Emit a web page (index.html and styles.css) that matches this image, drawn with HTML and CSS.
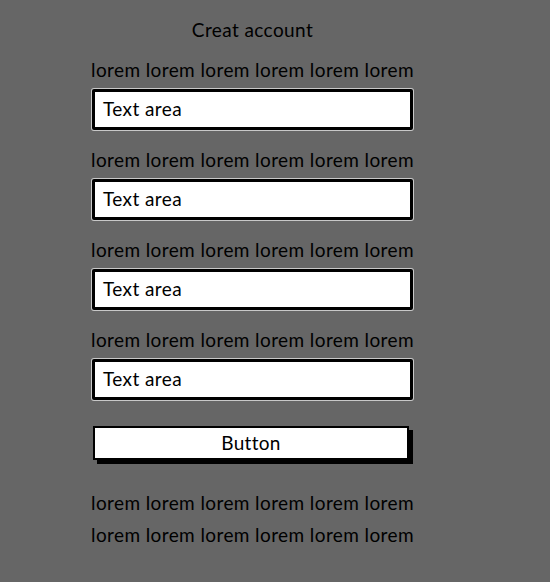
FILE: index.html
```html
<!DOCTYPE html>
<html>
<head>
<meta charset="utf-8">
<link rel="stylesheet" href="styles.css">
</head>
<body>
<div class="form">
  <div class="title">Creat account</div>
  <div class="group">
    <div class="label">lorem lorem lorem lorem lorem lorem</div>
    <div class="field">Text area</div>
  </div>
  <div class="group">
    <div class="label">lorem lorem lorem lorem lorem lorem</div>
    <div class="field">Text area</div>
  </div>
  <div class="group">
    <div class="label">lorem lorem lorem lorem lorem lorem</div>
    <div class="field">Text area</div>
  </div>
  <div class="group">
    <div class="label">lorem lorem lorem lorem lorem lorem</div>
    <div class="field">Text area</div>
  </div>
  <div class="button">Button</div>
  <div class="footer">
    <div class="line">lorem lorem lorem lorem lorem lorem</div>
    <div class="line">lorem lorem lorem lorem lorem lorem</div>
  </div>
</div>
</body>
</html>
```
FILE: styles.css
```css
html, body {
  margin: 0;
  padding: 0;
  background: #666666;
}
body {
  width: 550px;
  height: 582px;
  overflow: hidden;
  font-family: Lato, "Open Sans", sans-serif;
  color: #000;
}
.form {
  display: flex;
  flex-direction: column;
  width: 323px;
  margin-left: 91px;
  padding-top: 18px;
}
.title {
  height: 24px;
  line-height: 24px;
  text-align: center;
  font-size: 19px;
  letter-spacing: 0.4px;
  margin-bottom: 16px;
}
.group {
  display: flex;
  flex-direction: column;
  gap: 6px;
  margin-bottom: 17px;
}
.label {
  height: 24px;
  line-height: 24px;
  font-size: 19px;
  letter-spacing: 0.4px;
  white-space: nowrap;
}
.field {
  box-sizing: border-box;
  height: 41px;
  margin: 1px;
  border: 3px solid #000;
  box-shadow: 0 0 0 1px #c8c8c8;
  background: #fff;
  padding-left: 8px;
  line-height: 33px;
  font-size: 19px;
  letter-spacing: 0.4px;
  border-radius: 2px;
}
.button {
  box-sizing: border-box;
  margin-top: 8px;
  margin-left: 2px;
  width: 316px;
  height: 34px;
  border: 2px solid #000;
  box-shadow: 4px 4px 0 #000;
  background: #fff;
  text-align: center;
  line-height: 30px;
  font-size: 19px;
  letter-spacing: 0.3px;
}
.footer {
  margin-top: 31px;
  display: flex;
  flex-direction: column;
}
.line {
  height: 32px;
  line-height: 24px;
  font-size: 19px;
  letter-spacing: 0.4px;
  white-space: nowrap;
}
```
